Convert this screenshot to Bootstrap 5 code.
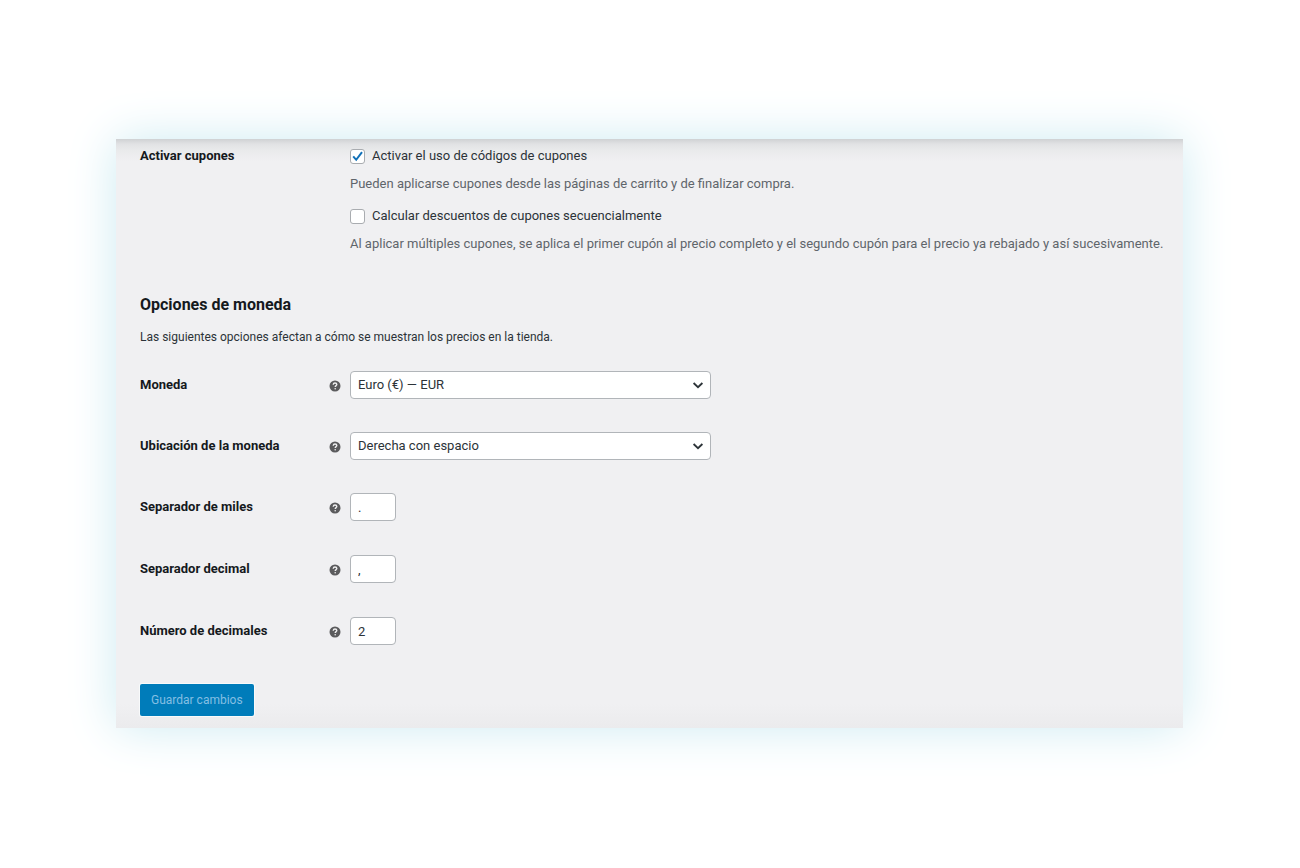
<!DOCTYPE html>
<html lang="es">
<head>
<meta charset="utf-8">
<meta name="viewport" content="width=device-width, initial-scale=1">
<title>Ajustes de la tienda</title>
<link href="https://cdn.jsdelivr.net/npm/bootstrap@5.3.0/dist/css/bootstrap.min.css" rel="stylesheet">
<style>
  body { background: #fff; color: #2c3338; font-family: Roboto, "Liberation Sans", sans-serif; font-size: 13px; line-height: 20px; }
  .settings-page { padding: 139px 9% 139px calc(9% - 1px); }
  .settings-panel {
    padding: 7px 12px 12px 24px;
    background: linear-gradient(#cfd1d3, #e1e2e4 5px, #eaebec 12px, #f0f0f2 22px, #f0f0f2 calc(100% - 24px), #ebebed);
    box-shadow: 0 0 46px #cdebf2;
  }
  .setting-name { flex: 0 0 180px; color: #15191d; font-weight: 700; }
  .help-slot { flex: 0 0 30px; }
  .help-slot svg { display: block; margin: 2px 0 0 9px; }
  .check-line { gap: 7px; margin-bottom: 8px; }
  .hint { color: #5f656b; }
  .section-title { color: #15191d; font-size: 16px; line-height: 20px; font-weight: 700; margin-bottom: 12px; }
  .intro { font-size: 12px; margin-bottom: 24px; }
  .settings-panel .form-check-input {
    width: 15px; height: 15px; margin: 0; border: 1px solid #a9acb0; border-radius: 3px; background-color: #fff;
  }
  .settings-panel .form-check-input:checked {
    background-size: 15px 15px;
    background-image: url("data:image/svg+xml,%3Csvg xmlns='http://www.w3.org/2000/svg' viewBox='0 0 15 15'%3E%3Cpath d='M3.2 7.4 6.2 10.8 12 3.2' fill='none' stroke='%231271b8' stroke-width='2'/%3E%3C/svg%3E");
  }
  .settings-panel .form-select, .settings-panel .form-control {
    height: 28px; padding: 0 7px; border: 1px solid #b1b5b9; border-radius: 4px; color: #2c3338; background-color: #fff; font-size: 13px; line-height: 20px;
  }
  .settings-panel .form-select {
    width: 361px; background-position: right 6px center; background-size: 12px 12px;
    background-image: url("data:image/svg+xml,%3Csvg xmlns='http://www.w3.org/2000/svg' viewBox='0 0 12 12'%3E%3Cpath d='M1.6 4 6 8.2 10.4 4' fill='none' stroke='%232c3338' stroke-width='1.8'/%3E%3C/svg%3E");
  }
  .settings-panel .form-control { width: 46px; }
  .select-row { margin-bottom: 33px; }
  .input-row { margin-bottom: 34px; }
  .save-btn, .save-btn:disabled {
    height: 32px; padding: 0 11px; border: 0; border-radius: 2px; background: #007cba; color: #84bfe3; font-size: 12px; line-height: 20px; opacity: 1;
    box-shadow: 0 0 0 1px #f8fafb;
  }
  .coupons { margin-bottom: 41px; }
  .coupon-block { margin-bottom: 12px; }
  .save-area { margin-top: 39px; }
</style>
</head>
<body>
<svg class="d-none" aria-hidden="true">
  <symbol id="help" viewBox="0 0 12 12">
    <circle cx="6" cy="6" r="5.5" fill="#5b5b5d"/>
    <path d="M4.2 4.7C4.300 3.500 5 3 6 3s1.800.6 1.800 1.500C7.800 5.600 6.200 5.600 6.200 7" fill="none" stroke="#f0f0f1" stroke-width="1.400"/>
    <circle cx="6.200" cy="8.700" r=".8" fill="#f0f0f1"/>
  </symbol>
</svg>
<main class="settings-page">
  <form class="settings-panel">
    <section class="coupons d-flex">
      <div class="setting-name">Activar cupones</div>
      <div class="help-slot"></div>
      <div>
        <div class="coupon-block">
          <div class="check-line d-flex align-items-center">
            <input class="form-check-input flex-shrink-0" type="checkbox" id="enable" checked>
            <label for="enable">Activar el uso de códigos de cupones</label>
          </div>
          <div class="hint">Pueden aplicarse cupones desde las páginas de carrito y de finalizar compra.</div>
        </div>
        <div class="check-line d-flex align-items-center">
          <input class="form-check-input flex-shrink-0" type="checkbox" id="sequential">
          <label for="sequential">Calcular descuentos de cupones secuencialmente</label>
        </div>
        <div class="hint">Al aplicar múltiples cupones, se aplica el primer cupón al precio completo y el segundo cupón para el precio ya rebajado y así sucesivamente.</div>
      </div>
    </section>
    <section>
      <h2 class="section-title">Opciones de moneda</h2>
      <p class="intro">Las siguientes opciones afectan a cómo se muestran los precios en la tienda.</p>
      <div class="select-row d-flex align-items-center">
        <label class="setting-name" for="currency">Moneda</label>
        <span class="help-slot"><svg width="12" height="12"><use href="#help"/></svg></span>
        <select class="form-select" id="currency"><option>Euro (€) — EUR</option></select>
      </div>
      <div class="select-row d-flex align-items-center">
        <label class="setting-name" for="position">Ubicación de la moneda</label>
        <span class="help-slot"><svg width="12" height="12"><use href="#help"/></svg></span>
        <select class="form-select" id="position"><option>Derecha con espacio</option></select>
      </div>
      <div class="input-row d-flex align-items-center">
        <label class="setting-name" for="thousands">Separador de miles</label>
        <span class="help-slot"><svg width="12" height="12"><use href="#help"/></svg></span>
        <input class="form-control" id="thousands" type="text" value=".">
      </div>
      <div class="input-row d-flex align-items-center">
        <label class="setting-name" for="decimal">Separador decimal</label>
        <span class="help-slot"><svg width="12" height="12"><use href="#help"/></svg></span>
        <input class="form-control" id="decimal" type="text" value=",">
      </div>
      <div class="d-flex align-items-center">
        <label class="setting-name" for="decimals">Número de decimales</label>
        <span class="help-slot"><svg width="12" height="12"><use href="#help"/></svg></span>
        <input class="form-control" id="decimals" type="text" value="2">
      </div>
    </section>
    <div class="save-area"><button class="btn save-btn" type="submit" disabled>Guardar cambios</button></div>
  </form>
</main>
<script src="https://cdn.jsdelivr.net/npm/bootstrap@5.3.0/dist/js/bootstrap.bundle.min.js"></script>
</body>
</html>
